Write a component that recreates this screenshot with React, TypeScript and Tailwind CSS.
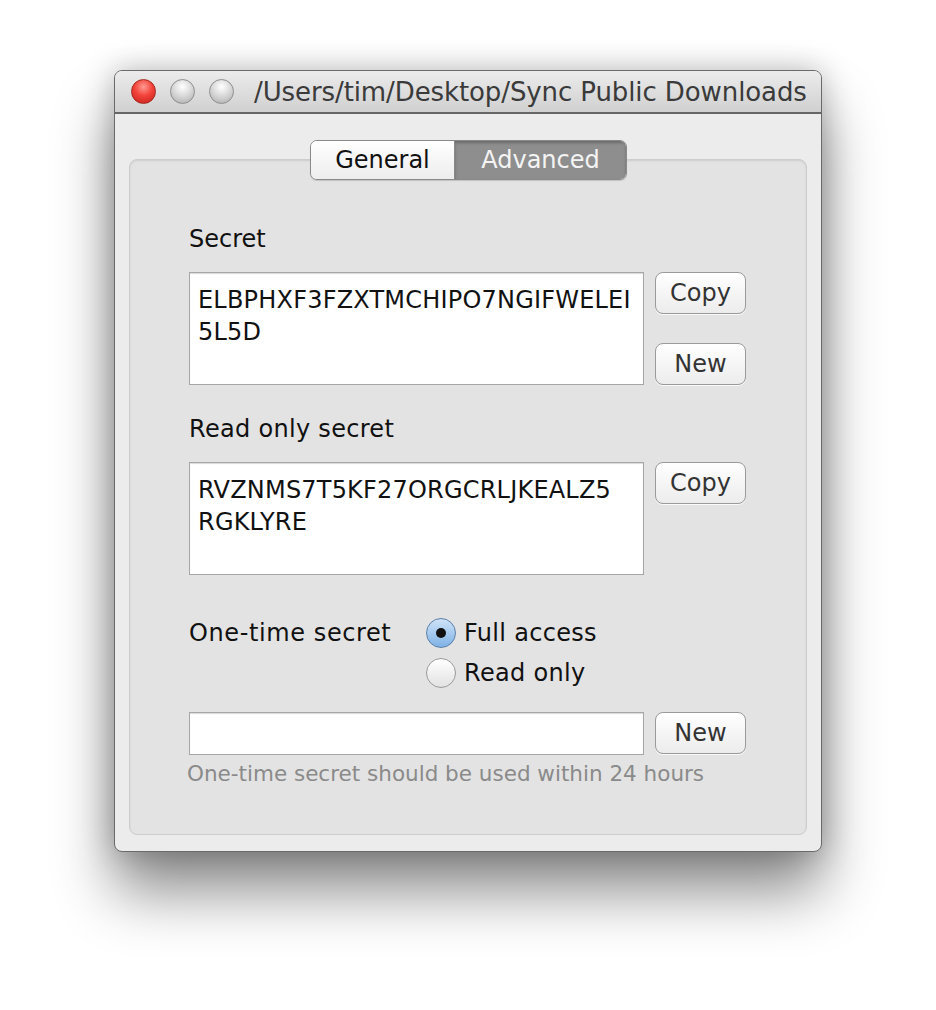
import React from 'react'

const font = { fontFamily: '"DejaVu Sans", "Noto Sans", sans-serif' }

function Light({ red }: { red?: boolean }) {
  return (
    <div
      className={
        'w-[25px] h-[25px] rounded-full border ' +
        (red
          ? 'border-[#a5261d] bg-[radial-gradient(circle_at_50%_30%,#ff9b93_0%,#f2433a_45%,#c2201a_100%)]'
          : 'border-[#8f8f8f] bg-[radial-gradient(circle_at_50%_30%,#ffffff_0%,#d6d6d6_50%,#a9a9a9_100%)]')
      }
    />
  )
}

function Btn({ children }: { children: React.ReactNode }) {
  return (
    <button className="w-[91px] h-[42px] rounded-[8px] border border-[#9a9a9a] bg-gradient-to-b from-white to-[#ececec] text-[24px] text-[#333] leading-none shadow-[0_1px_0_rgba(255,255,255,0.8)]">
      {children}
    </button>
  )
}

function Radio({ checked }: { checked?: boolean }) {
  return (
    <div
      className={
        'w-[30px] h-[30px] rounded-full border flex items-center justify-center ' +
        (checked
          ? 'border-[#5a7fa8] bg-gradient-to-b from-[#cfe3f7] to-[#7fb2e6]'
          : 'border-[#9a9a9a] bg-gradient-to-b from-white to-[#e2e2e2]')
      }
    >
      {checked && <div className="w-[10px] h-[10px] rounded-full bg-[#111]" />}
    </div>
  )
}

export default function App() {
  return (
    <div className="min-h-screen bg-white pt-[70px] pl-[114px]" style={font}>
      <div className="w-[708px] h-[782px] rounded-[8px] bg-[#ececec] border border-[#6a6a6a] shadow-[0_40px_60px_rgba(0,0,0,0.45),0_0_30px_rgba(0,0,0,0.25)] flex flex-col overflow-hidden">
        {/* title bar */}
        <div className="h-[43px] shrink-0 bg-gradient-to-b from-[#ececec] to-[#d0d0d0] border-b-2 border-[#666] flex items-center pl-[16px]">
          <div className="flex gap-[14px]">
            <Light red />
            <Light />
            <Light />
          </div>
          <div className="ml-[20px] text-[26px] text-[#3a3a3a] tracking-[-0.1px] leading-none">
            /Users/tim/Desktop/Sync Public Downloads
          </div>
        </div>

        {/* content */}
        <div className="flex-1 px-[14px] pt-[25px] pb-[16px] flex flex-col">
          <div className="relative flex-1 mt-[20px] rounded-[8px] bg-[#e3e3e3] border border-[#cdcdcd] shadow-[inset_0_1px_2px_rgba(0,0,0,0.1)] pl-[59px] pr-[59px] pt-[67px]">
            {/* tabs */}
            <div className="absolute left-[180px] -top-[20px] flex h-[40px] rounded-[7px] border border-[#8a8a8a] overflow-hidden text-[24px] leading-none shadow-[0_1px_1px_rgba(0,0,0,0.15)]">
              <div className="w-[144px] flex items-center justify-center bg-gradient-to-b from-white to-[#ededed] text-[#111] border-r border-[#8a8a8a]">
                General
              </div>
              <div className="w-[171px] flex items-center justify-center bg-[#8e8e8e] text-[#f4f4f4] shadow-[inset_0_2px_3px_rgba(0,0,0,0.25)]">
                Advanced
              </div>
            </div>

            <div className="text-[24px] text-[#111] leading-none h-[31px]">Secret</div>
            <div className="flex gap-[11px] mt-[14px]">
              <div className="w-[455px] h-[113px] bg-white border border-[#a6a6a6] shadow-[inset_0_1px_1px_rgba(0,0,0,0.15)] px-[8px] pt-[11px] text-[24px] leading-[32px] text-[#111] tracking-[0.2px]">
                ELBPHXF3FZXTMCHIPO7NGIFWELEI<br />5L5D
              </div>
              <div className="flex flex-col justify-between">
                <Btn>Copy</Btn>
                <Btn>New</Btn>
              </div>
            </div>

            <div className="text-[24px] text-[#111] leading-none mt-[32px] h-[34px] tracking-[0.3px]">Read only secret</div>
            <div className="flex gap-[11px] mt-[11px]">
              <div className="w-[455px] h-[113px] bg-white border border-[#a6a6a6] shadow-[inset_0_1px_1px_rgba(0,0,0,0.15)] px-[8px] pt-[11px] text-[24px] leading-[32px] text-[#111] tracking-[0.2px]">
                RVZNMS7T5KF27ORGCRLJKEALZ5<br />RGKLYRE
              </div>
              <div className="flex flex-col">
                <Btn>Copy</Btn>
              </div>
            </div>

            <div className="flex mt-[38px]">
              <div className="w-[237px] text-[24px] text-[#111] leading-[40px] tracking-[0.6px]">One-time secret</div>
              <div className="flex flex-col">
                <div className="flex items-center gap-[8px] h-[40px]">
                  <Radio checked />
                  <span className="text-[24px] text-[#111] tracking-[0.3px]">Full access</span>
                </div>
                <div className="flex items-center gap-[8px] h-[40px]">
                  <Radio />
                  <span className="text-[24px] text-[#111] tracking-[0.3px]">Read only</span>
                </div>
              </div>
            </div>

            <div className="flex gap-[11px] mt-[19px]">
              <div className="w-[455px] h-[43px] bg-white border border-[#a6a6a6] shadow-[inset_0_1px_1px_rgba(0,0,0,0.15)]" />
              <Btn>New</Btn>
            </div>
            <div className="text-[21.5px] text-[#8a8a8a] mt-[8px] leading-none -ml-[2px]">
              One-time secret should be used within 24 hours
            </div>
          </div>
        </div>
      </div>
    </div>
  )
}
